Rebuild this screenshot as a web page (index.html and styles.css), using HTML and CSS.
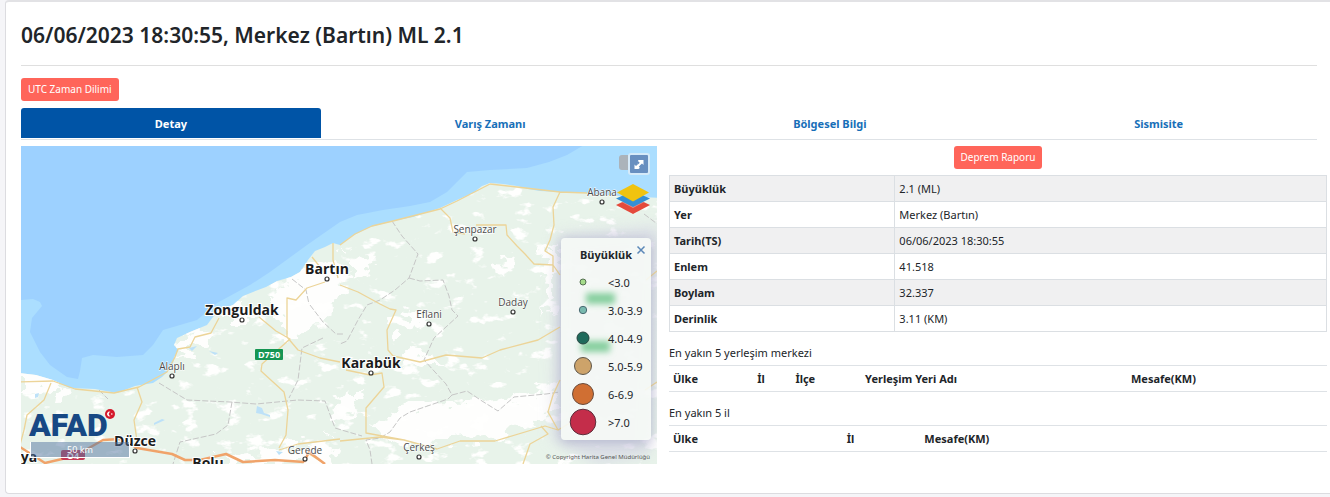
FILE: index.html
```html
<!DOCTYPE html>
<html lang="tr">
<head>
<meta charset="utf-8">
<title>Deprem Detayı</title>
<link rel="stylesheet" href="styles.css">
</head>
<body>
<main class="card">
  <header class="card-head">
    <h1 class="title">06/06/2023 18:30:55, Merkez (Bartın) ML 2.1</h1>
  </header>
  <button class="btn" type="button">UTC Zaman Dilimi</button>
  <nav class="tabs">
    <a class="tab active" href="#detay">Detay</a>
    <a class="tab" href="#varis">Varış Zamanı</a>
    <a class="tab" href="#bolgesel">Bölgesel Bilgi</a>
    <a class="tab" href="#sismisite">Sismisite</a>
  </nav>
  <div class="content">
    <section class="map">
      <svg class="map-canvas" viewBox="21 146 636 318" preserveAspectRatio="xMinYMin slice" role="img" aria-label="Harita">
        <defs>
          <filter id="patches" x="0" y="0" width="100%" height="100%">
            <feTurbulence type="fractalNoise" baseFrequency="0.045 0.08" numOctaves="4" seed="8"/>
            <feColorMatrix type="matrix" values="0 0 0 0 1  0 0 0 0 1  0 0 0 0 0.99  10 0 0 0 -6.2"/>
            <feComposite in2="SourceGraphic" operator="in"/>
          </filter>
          <filter id="rough" x="-5%" y="-5%" width="110%" height="110%">
            <feTurbulence type="fractalNoise" baseFrequency="0.06 0.09" numOctaves="3" seed="3"/>
            <feDisplacementMap in="SourceGraphic" scale="34" xChannelSelector="R" yChannelSelector="G"/>
            <feGaussianBlur stdDeviation="0.6"/>
          </filter>
          <filter id="soft" x="-20%" y="-20%" width="140%" height="140%"><feGaussianBlur stdDeviation="7"/></filter>
          <clipPath id="landClip"><path id="landShape" d="M20 373L36 375L53 380L70 388L95 389L117 393L135 386L153 383L162 377L167 372L173 363L175 356L178 350L174 345L177 338L190 332L207 325L213 317L219 310L233 305L243 296L253 292L266 287L277 281L291 277L300 272L308 260L315 251L325 247L333 243L340 245L352 236L370 227L393 221L413 217L440 208L457 200L473 193L482 186L490 183L503 184L517 186L528 189L540 191L560 192L587 193L620 196L660 198V466H20Z"/></clipPath>
        </defs>
        <rect x="20" y="145" width="640" height="322" fill="#abdeff"/>
        <path fill="#9dd1ff" d="M20 145H584L567 155L549 162L527 168L490 170L467 172L457 182L447 192L430 202L410 206L383 210L357 215L340 222L307 245L270 272L250 285L217 303L197 320L163 330L153 345L143 355L117 357L93 355L82 358L80 371L78 379L67 377L50 365L40 352L30 332L32 318L42 306L40 302L33 299L20 300Z"/>
        <use href="#landShape" fill="#e8f3ea"/>
        <g clip-path="url(#landClip)">
          <g fill="#fefefd" filter="url(#rough)">
            <path d="M20 368L70 384L60 396L20 392ZM278 292L300 270L340 260L350 276L338 298L330 318L310 326L292 340L285 330L278 312ZM215 308L240 303L258 314L246 322L224 322ZM177 336L200 328L212 333L206 343L184 356L176 354ZM350 256L376 264L366 276L350 274ZM394 320L414 312L426 314L418 328L400 334ZM405 350L430 354L446 362L424 362L406 368ZM500 256L512 258L508 274L498 272ZM384 412L430 404L470 402L530 394L555 380L560 406L530 424L490 438L430 444L390 446L376 430ZM344 392L364 392L360 410L340 418L332 432L330 415ZM540 250L556 246V296L547 318ZM220 456L270 452L300 444L326 440L336 464H220Z"/>
          </g>
          <use href="#landShape" filter="url(#patches)"/>
          <g filter="url(#soft)" fill="#d4d3e4" opacity=".6"><path d="M556 235L660 225V270L650 455L600 466L552 440Z"/></g>
        </g>
        <g fill="#bde1f8">
          <path d="M257 406l5 2 2 5 6 2v2l-9-3-5-1zM154 423l8-4 3 1-11 5zM35 394l4-1-1 4-3 1zM189 348l8-2-5 5zM209 351l9 2-3 2zM276 451l7 1-4 3z"/>
        </g>
        <g class="border-lines">
          <path d="M392 221L402 236L418 254L409 278L395 290L380 300L367 305L358 320L347 341L340 344M409 278L420 281L443 280L449 296L452 310L458 316L434 338L424 360L446 384L452 395L448 399L410 412L400 418L390 432L380 438L366 440L370 450L372 464M452 395L467 391L482 401L498 411L514 397L546 394L560 392"/>
          <path d="M159 383L187 400L230 402L256 404L298 400L325 401L335 428L345 431L362 436M232 402L228 425L216 434L180 442L173 464M310 305L323 322L336 334L344 334M323 338L302 348L298 380L289 398M99 390L108 399M292 279L306 290L309 304M644 214L660 226"/>
        </g>
        <g class="roads">
          <path d="M20 382L53 381L75 389L114 393L139 387L167 372L175 357L178 349L190 347L195 337L211 333L219 318M51 383L44 400L27 415L24 430L20 445M137 387L142 402L134 420L137 441M333 243L333 260L338 278M312 257L325 273M325 282L307 288L296 300L287 298V337L298 350L320 358L340 362M259 317L276 331L290 339L262 364L261 371L284 392L288 410L286 435L279 448"/>
          <path d="M340 245L355 234L372 226L393 221L440 209L457 201L490 184L517 187L560 192L587 193M440 208L450 218L453 232L465 234M476 225H506L507 235L517 246L525 254L534 264L553 265L560 275M560 192L553 207L554 225L550 240L545 251L553 256V272M340 285L358 292L380 304L390 309L396 310L387 330L388 350L393 356L420 362L446 355L482 358L500 350L538 340L560 327M346 370L370 375L382 373L384 387L366 408V433L404 440L380 437L340 441M404 440L437 449L460 441L495 441L545 426L558 430L575 420M558 430L548 412L553 395L560 380M541 426L548 434L530 444L523 464M645 390L657 382M646 280L657 271M279 450L298 444L340 439M306 452L325 464"/>
        </g>
        <path class="motorway" d="M20 447L45 463L75 456L103 440L120 439L137 448L172 454L185 460L200 460L226 454L243 462L275 460L304 462M304 462L309 452L325 464"/>
        <g class="sites">
          <circle cx="327" cy="279" r="2"/><circle cx="242" cy="320" r="2"/><circle cx="371" cy="373" r="2"/><circle cx="135" cy="451" r="2"/>
          <circle cx="475" cy="239" r="2"/><circle cx="602" cy="202" r="2"/><circle cx="513" cy="312" r="2"/><circle cx="429" cy="324" r="2"/><circle cx="172" cy="376" r="2"/><circle cx="305" cy="459" r="2"/><circle cx="419" cy="457" r="2"/>
        </g>
        <rect x="255" y="349" width="28" height="11" rx="1" fill="#159552"/>
        <text class="shield" x="269" y="358">D750</text>
        <rect x="61" y="450" width="24" height="10" rx="2" fill="#c63a55"/>
        <text class="shield" x="73" y="459">O4</text>
        <g class="city">
          <text x="327" y="274">Bartın</text>
          <text x="242" y="315">Zonguldak</text>
          <text x="371" y="368">Karabük</text>
          <text x="135" y="446">Düzce</text>
          <text x="208" y="468">Bolu</text>
          <text x="29" y="462">ya</text>
        </g>
        <g class="town">
          <text x="475" y="233">Şenpazar</text>
          <text x="602" y="196">Abana</text>
          <text x="513" y="306">Daday</text>
          <text x="429" y="318">Eflani</text>
          <text x="172" y="370">Alaplı</text>
          <text x="305" y="454">Gerede</text>
          <text x="419" y="451">Çerkeş</text>
        </g>
      </svg>

      <div class="controls">
        <div class="fullscreen-row">
          <span class="handle"></span>
          <button class="fullscreen" type="button" aria-label="Tam ekran">
            <svg width="18" height="18" viewBox="0 0 18 18"><path d="M8.500 5H13.500V10L12 8.500L9.800 10.500L11 12L8.500 14H4.500V9.500L6 11L8.200 9L7 7.500Z" fill="#fff"/><path d="M7 6.500L9 8.500M9.500 11L11.500 13" stroke="#688fc0" stroke-width="2"/></svg>
          </button>
        </div>
        <button class="layers" type="button" aria-label="Katmanlar">
          <svg width="34" height="32" viewBox="0 0 34 32"><path d="M0 22L17 14L34 22L17 31Z" fill="#e44a3c"/><path d="M0 16L17 8L34 16L17 25Z" fill="#fff" opacity=".35"/><path d="M0 15.500L17 8L34 15.500L17 24Z" fill="#3590d4"/><path d="M1 9.500L17 1L33 9.500L17 18.500Z" fill="#f0c30f"/></svg>
        </button>
      </div>

      <aside class="legend">
        <svg class="legend-glow" viewBox="0 0 90 202" aria-hidden="true"><defs><filter id="glow" x="-30%" y="-80%" width="160%" height="260%"><feGaussianBlur stdDeviation="3"/></filter></defs><rect x="25" y="55" width="29" height="11" fill="#86cf9e" filter="url(#glow)"/><rect x="20" y="103" width="29" height="11" fill="#86cf9e" filter="url(#glow)"/></svg>
        <button class="legend-close" type="button" aria-label="Kapat"><svg width="10" height="10" viewBox="0 0 10 10"><path d="M1.500 1.500l7 7M8.500 1.500l-7 7" stroke="#5b88b8" stroke-width="1.500"/></svg></button>
        <h2 class="legend-title">Büyüklük</h2>
        <ul class="legend-list">
          <li><svg width="28" height="28" viewBox="-14 -14 28 28"><circle r="3" fill="#a5dc8b" stroke="#557052"/></svg>&lt;3.0</li>
          <li><svg width="28" height="28" viewBox="-14 -14 28 28"><circle r="3.700" fill="#78b9ae" stroke="#4a6a72"/></svg>3.0-3.9</li>
          <li><svg width="28" height="28" viewBox="-14 -14 28 28"><circle r="6" fill="#1f6a5b" stroke="#25443f"/></svg>4.0-4.9</li>
          <li><svg width="28" height="28" viewBox="-14 -14 28 28"><circle r="8.500" fill="#cda36a" stroke="#5e564a"/></svg>5.0-5.9</li>
          <li><svg width="28" height="28" viewBox="-14 -14 28 28"><circle r="10.500" fill="#d06f33" stroke="#6a4c3c"/></svg>6-6.9</li>
          <li><svg width="28" height="28" viewBox="-14 -14 28 28"><circle r="12.800" fill="#c42d4a" stroke="#5f2f3c"/></svg>&gt;7.0</li>
        </ul>
      </aside>

      <div class="brand">
        <span class="brand-name">AFAD</span>
        <svg class="brand-flag" width="10" height="10" viewBox="0 0 10 10"><circle cx="5" cy="5" r="5" fill="#d4192b"/><path d="M5.600 3.100A2.300 2.300 0 1 0 5.600 6.900A1.900 1.900 0 1 1 5.600 3.100Z" fill="#fff"/><circle cx="6.800" cy="5" r=".8" fill="#fff"/></svg>
      </div>
      <div class="scale">50 km</div>
      <div class="copyright">© Copyright Harita Genel Müdürlüğü</div>
    </section>

    <section class="details">
      <button class="btn report" type="button">Deprem Raporu</button>
      <table class="info">
        <tbody>
          <tr><th scope="row">Büyüklük</th><td>2.1 (ML)</td></tr>
          <tr><th scope="row">Yer</th><td>Merkez (Bartın)</td></tr>
          <tr><th scope="row">Tarih(TS)</th><td>06/06/2023 18:30:55</td></tr>
          <tr><th scope="row">Enlem</th><td>41.518</td></tr>
          <tr><th scope="row">Boylam</th><td>32.337</td></tr>
          <tr><th scope="row">Derinlik</th><td>3.11 (KM)</td></tr>
        </tbody>
      </table>
      <table class="near places">
        <caption>En yakın 5 yerleşim merkezi</caption>
        <thead><tr><th class="w-country">Ülke</th><th class="w-il">İl</th><th class="w-ilce">İlçe</th><th class="w-name">Yerleşim Yeri Adı</th><th>Mesafe(KM)</th></tr></thead>
      </table>
      <table class="near cities">
        <caption>En yakın 5 il</caption>
        <thead><tr><th class="w-country">Ülke</th><th class="w-il">İl</th><th>Mesafe(KM)</th></tr></thead>
      </table>
    </section>
  </div>
</main>
</body>
</html>
```

FILE: styles.css
```css
* { box-sizing: border-box; }

body {
  margin: 0;
  background: #f5f5f8;
  color: #212529;
  font: 11px/17px "Noto Sans", "Open Sans", sans-serif;
}

button { font: inherit; cursor: pointer; }

.card {
  margin-left: 5px;
  padding: 0 3px 29px 15px;
  background: #fff;
  border: 1px solid #dcdce0;
  border-top: 2px solid #e2e2e5;
  border-right: 0;
  border-radius: 4px 0 0 4px;
}

.card-head {
  margin: 0 10px 12px 0;
  padding: 19px 0 16px;
  border-bottom: 1px solid #dfdfdf;
}

.title {
  margin: 0;
  font: 600 21px/28px "Noto Sans", "Open Sans", sans-serif;
}

.btn {
  display: block;
  height: 23px;
  padding: 0 7px;
  border: 0;
  border-radius: 3px;
  background: #ff655a;
  color: #fff;
  font-size: 10px;
  line-height: 23px;
}

.tabs {
  display: flex;
  margin: 7px 10px 6px 0;
  padding-bottom: 1px;
  border-bottom: 1px solid #dee2e6;
}

.tab {
  flex: 1 1 auto;
  padding: 7px 0 6px;
  border-radius: 3px 3px 0 0;
  color: #176fb8;
  font-weight: 700;
  text-align: center;
  text-decoration: none;
}

.tab.active { background: #0054a6; color: #fff; }

.content {
  display: grid;
  grid-template-columns: 636fr 658fr;
  gap: 12px;
}

.map {
  position: relative;
  height: 318px;
  overflow: hidden;
}

.map-canvas { display: block; width: 100%; height: 100%; }

.roads { fill: none; stroke: #ecd498; stroke-width: 1.3; stroke-linejoin: round; }
.motorway { fill: none; stroke: #f0a36a; stroke-width: 2.5; stroke-linejoin: round; }
.border-lines { fill: none; stroke: #c6c6c6; stroke-width: 1; stroke-dasharray: 6 2; }
.sites { fill: #fff; stroke: #333; stroke-width: 1.2; }
.city text {
  font: 700 14px "Open Sans", "Noto Sans", sans-serif;
  fill: #1b1b1b;
  stroke: #fff;
  stroke-width: 2;
  paint-order: stroke;
  text-anchor: middle;
}
.town text {
  font: 10px "Open Sans", "Noto Sans", sans-serif;
  fill: #4a4a4a;
  stroke: #fff;
  stroke-width: 1;
  paint-order: stroke;
  text-anchor: middle;
}
.shield {
  font: 700 9px "Open Sans", "Noto Sans", sans-serif;
  fill: #fff;
  text-anchor: middle;
}

.controls {
  position: absolute;
  top: 7px;
  right: 7px;
  display: flex;
  flex-direction: column;
  align-items: flex-end;
  gap: 8px;
}
.fullscreen-row { display: flex; align-items: flex-start; }
.handle { width: 9px; height: 15px; margin-top: 2px; border-radius: 3px 0 0 3px; background: #abb3ba; }
.fullscreen {
  width: 22px;
  height: 22px;
  padding: 0;
  border: 2px solid #d5eaf9;
  border-radius: 3px;
  background: #688fc0;
}
.fullscreen svg, .layers svg, .legend-close svg { display: block; }
.layers { padding: 0; border: 0; background: none; }

.legend {
  position: absolute;
  right: 6px;
  bottom: 24px;
  width: 90px;
  padding: 8px 0 4px;
  border-radius: 4px;
  background: rgba(247, 251, 247, .88);
  box-shadow: 0 2px 12px rgba(90, 90, 150, .3);
}
.legend-glow { position: absolute; inset: 0; width: 100%; height: 100%; }
.legend-close { position: absolute; top: 7px; right: 5px; padding: 0; border: 0; background: none; }
.legend-title {
  position: relative;
  margin: 0 0 4px;
  font-size: 11px;
  line-height: 18px;
  text-align: center;
}
.legend-list { position: relative; margin: 0; padding: 0; list-style: none; font-size: 11px; }
.legend-list li { display: flex; align-items: center; gap: 11px; height: 28px; padding-left: 8px; }

.brand { position: absolute; left: 8px; bottom: 23px; display: flex; }
.brand-name { color: #174884; font: 900 32px/32px Roboto, "Open Sans", sans-serif; }
.brand-flag { margin-left: -3px; }

.scale {
  position: absolute;
  left: 9px;
  bottom: 6px;
  width: 100px;
  height: 16px;
  border: 1px solid #fff;
  border-top: 0;
  background: rgba(82, 116, 160, .5);
  color: #fff;
  font-size: 9px;
  line-height: 15px;
  text-align: center;
}

.copyright {
  position: absolute;
  right: 7px;
  bottom: 2px;
  color: #555;
  font-size: 6px;
  line-height: 10px;
}

.report { margin: 0 auto 6px; }

table { width: 100%; border-collapse: collapse; }
th, td { padding: 4px; text-align: left; }

.info th, .info td { border: 1px solid #dbdfe3; }
.info th { width: 34.3%; }
.info tr:nth-child(odd) { background: #f0f0f1; }

.near { table-layout: fixed; }
.near caption { padding: 12px 0 4px; text-align: left; }
.near th { border: solid #dee2e6; border-width: 1px 0; }
.places .w-country { width: 12.8%; }
.places .w-il { width: 5.8%; }
.places .w-ilce { width: 10.6%; }
.places .w-name { width: 40.4%; }
.cities .w-country { width: 26.4%; }
.cities .w-il { width: 11.8%; }
```
